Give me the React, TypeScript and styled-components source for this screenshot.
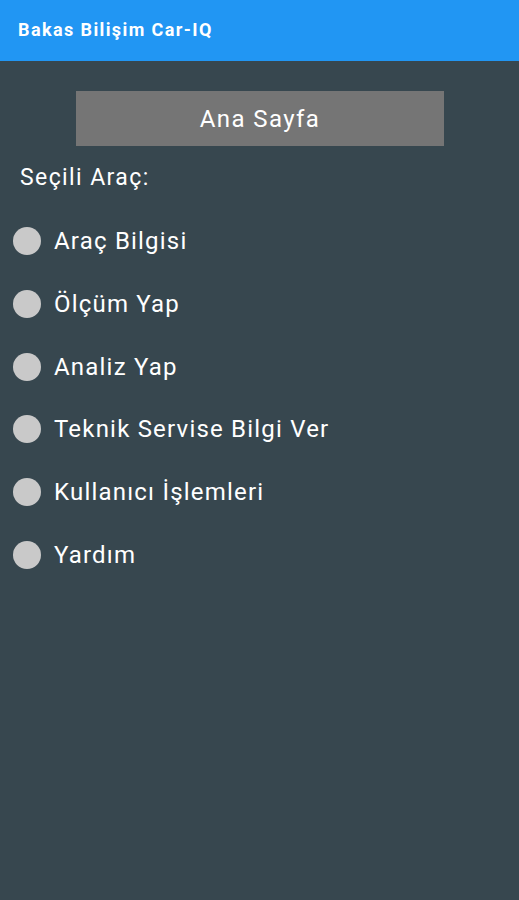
import React from "react";
import styled, { createGlobalStyle } from "styled-components";

const Global = createGlobalStyle`
  html, body { margin: 0; padding: 0; background: #37474f; }
  body { font-family: Roboto, "Noto Sans", sans-serif; }
`;

const Page = styled.div`
  width: 519px;
  min-height: 900px;
  background: #37474f;
  display: flex;
  flex-direction: column;
`;

const AppBar = styled.div`
  height: 61px;
  background: #2196f3;
  display: flex;
  align-items: center;
  padding-left: 18px;
  box-sizing: border-box;
`;

const Title = styled.div`
  color: #fff;
  font-size: 18px;
  font-weight: 700;
  letter-spacing: 1.4px;
  margin-top: -2px;
`;

const Content = styled.div`
  display: flex;
  flex-direction: column;
  padding-top: 30px;
`;

const HomeButton = styled.div`
  align-self: flex-start;
  margin-left: 76px;
  width: 368px;
  height: 55px;
  background: #757575;
  color: #fff;
  font-size: 24px;
  letter-spacing: 1.4px;
  display: flex;
  align-items: center;
  justify-content: center;
`;

const Selected = styled.div`
  color: #fff;
  font-size: 23px;
  letter-spacing: 1.4px;
  margin: 18px 0 0 20px;
  line-height: 28px;
`;

const List = styled.div`
  display: flex;
  flex-direction: column;
  margin-top: 18px;
`;

const Row = styled.div`
  display: flex;
  align-items: center;
  height: 62.7px;
  padding-left: 13px;
`;

const Dot = styled.span`
  width: 28px;
  height: 28px;
  border-radius: 50%;
  background: #c9c9c9;
  flex-shrink: 0;
`;

const Label = styled.span`
  color: #fff;
  font-size: 24px;
  letter-spacing: 1.2px;
  margin-left: 13px;
`;

const items = [
  "Araç Bilgisi",
  "Ölçüm Yap",
  "Analiz Yap",
  "Teknik Servise Bilgi Ver",
  "Kullanıcı İşlemleri",
  "Yardım",
];

export default function App() {
  return (
    <>
      <Global />
      <Page>
        <AppBar>
          <Title>Bakas Bilişim Car-IQ</Title>
        </AppBar>
        <Content>
          <HomeButton>Ana Sayfa</HomeButton>
          <Selected>Seçili Araç:</Selected>
          <List>
            {items.map((t) => (
              <Row key={t}>
                <Dot />
                <Label>{t}</Label>
              </Row>
            ))}
          </List>
        </Content>
      </Page>
    </>
  );
}
